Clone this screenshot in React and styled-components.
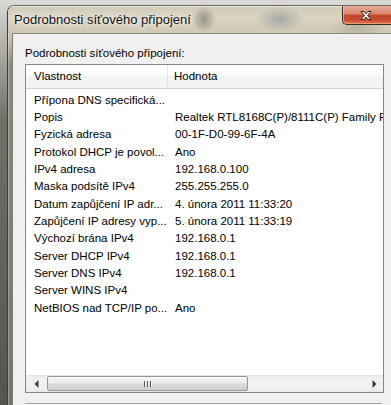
import React from "react";
import styled, { createGlobalStyle } from "styled-components";

const Global = createGlobalStyle`
  html, body { margin: 0; padding: 0; }
  body {
    width: 391px;
    height: 405px;
    overflow: hidden;
    background: linear-gradient(180deg, #d9d9d7 0px, #b4b6b0 40px, #6d716a 120px, #51564f 405px);
    font-family: "Liberation Sans", Arial, sans-serif;
  }
`;

const Desktop = styled.div`
  padding: 5px 0 0 7px;
  height: 400px;
`;

const Window = styled.div`
  width: 383px;
  height: 399px;
  border-top: 1px solid #6f6b60;
  border-left: 1px solid #3f3d37;
  border-top-left-radius: 7px;
  overflow: hidden;
  display: flex;
  flex-direction: column;
  background:
    linear-gradient(90deg, rgba(255,255,255,0.55) 0px, rgba(255,255,255,0) 1px),
    linear-gradient(180deg, #d4cebb 0px, #cdc7b3 28px, #8e8a7b 60px, #77746a 405px);
`;

const TitleBar = styled.div`
  height: 27px;
  flex: none;
  display: flex;
  align-items: flex-start;
  background:
    radial-gradient(ellipse 12px 13px at 196px 13px, rgba(70, 72, 66, 0.45), rgba(70,72,66,0) 100%),
    radial-gradient(ellipse 24px 12px at 272px 13px, rgba(110, 130, 140, 0.5), rgba(110,130,140,0) 100%),
    radial-gradient(ellipse 30px 10px at 350px 22px, rgba(150, 160, 130, 0.5), rgba(150,160,130,0) 100%),
    linear-gradient(180deg, #d2ccb9 0px, #d9d3c1 12px, #cfc8b4 27px);
  box-shadow: inset 0 1px 0 rgba(255,255,255,0.5);
`;

const Title = styled.div`
  padding: 6px 0 0 6px;
  font-size: 13px;
  line-height: 16px;
  color: #111;
  text-shadow: 0 0 6px rgba(255,255,255,0.95), 0 0 3px rgba(255,255,255,0.9);
  white-space: nowrap;
`;

const CloseButton = styled.div`
  margin-left: auto;
  width: 46px;
  height: 18px;
  border: 1px solid #3b2a24;
  border-top: none;
  border-right: none;
  border-bottom-left-radius: 5px;
  display: flex;
  align-items: center;
  justify-content: center;
  padding-right: 2px;
  background: linear-gradient(180deg, #e8aa98 0%, #d8836b 45%, #c2472b 50%, #c94a2c 75%, #e0744f 100%);
  box-shadow: inset 1px 0 0 rgba(255,255,255,0.45), inset 0 -1px 0 rgba(255,220,200,0.4);
`;

const Client = styled.div`
  flex: 1;
  margin-left: 4px;
  border-top: 1px solid #8c8879;
  border-left: 1px solid #7d7a6f;
  background: #f0f0f0;
  padding: 12px 0 0 12px;
  display: flex;
  flex-direction: column;
`;

const GroupLabel = styled.div`
  font-size: 11.5px;
  line-height: 14px;
  height: 18px;
  color: #000;
  white-space: nowrap;
`;

const ListBox = styled.div`
  width: 357px;
  height: 327px;
  border: 1px solid #828790;
  background: #fff;
  display: flex;
  flex-direction: column;
  overflow: hidden;
`;

const Header = styled.div`
  flex: none;
  height: 23px;
  display: grid;
  grid-template-columns: 142px 1fr;
  border-bottom: 1px solid #d5d5d5;
  background: linear-gradient(180deg, #ffffff 0%, #ffffff 45%, #f3f4f6 46%, #f3f4f6 100%);
`;

const HeaderCell = styled.div`
  font-size: 11.5px;
  line-height: 23px;
  padding-left: ${(p) => (p.$first ? "8px" : "6px")};
  border-right: ${(p) => (p.$first ? "1px solid #e3e4e6" : "none")};
  color: #000;
  white-space: nowrap;
`;

const Rows = styled.div`
  flex: 1;
  padding-top: 2px;
  overflow: hidden;
`;

const Row = styled.div`
  display: grid;
  grid-template-columns: 142px 1fr;
  height: 17.33px;
  align-items: center;
  font-size: 11.5px;
  color: #000;
  white-space: nowrap;
`;

const Cell = styled.div`
  padding-left: ${(p) => (p.$first ? "8px" : "7px")};
  overflow: hidden;
  white-space: nowrap;
`;

const ScrollBar = styled.div`
  flex: none;
  height: 17px;
  display: flex;
  align-items: stretch;
  background: linear-gradient(180deg, #e4e4e4 0px, #f1f1f1 3px, #f1f1f1 13px, #e9e9e9 17px);
`;

const ArrowButton = styled.div`
  width: ${(p) => p.$w}px;
  flex: none;
  display: flex;
  align-items: center;
  justify-content: center;
`;

const Thumb = styled.div`
  width: 199px;
  flex: none;
  margin: 1px 0;
  border: 1px solid #979797;
  border-radius: 2px;
  background: linear-gradient(180deg, #f5f5f5 0%, #ececec 45%, #dadada 55%, #d0d0d0 100%);
  box-shadow: inset 0 1px 0 #fff;
  display: flex;
  align-items: center;
  justify-content: center;
  gap: 1px;
`;

const Grip = styled.span`
  width: 1px;
  height: 6px;
  background: #4e4e4e;
  box-shadow: 1px 0 0 #fdfdfd;
  margin-right: 1px;
`;

const Spacer = styled.div`
  flex: 1;
`;

const Separator = styled.div`
  margin-top: 10px;
  width: 357px;
  height: 1px;
  background: #a0a0a0;
  box-shadow: 0 1px 0 #ffffff;
`;

const rows = [
  ["Přípona DNS specifická...", ""],
  ["Popis", "Realtek RTL8168C(P)/8111C(P) Family PCI-E Gigabit Ethernet NIC (NDIS 6.20)"],
  ["Fyzická adresa", "00-1F-D0-99-6F-4A"],
  ["Protokol DHCP je povol...", "Ano"],
  ["IPv4 adresa", "192.168.0.100"],
  ["Maska podsítě IPv4", "255.255.255.0"],
  ["Datum zapůjčení IP adr...", "4. února 2011 11:33:20"],
  ["Zapůjčení IP adresy vyp...", "5. února 2011 11:33:19"],
  ["Výchozí brána IPv4", "192.168.0.1"],
  ["Server DHCP IPv4", "192.168.0.1"],
  ["Server DNS IPv4", "192.168.0.1"],
  ["Server WINS IPv4", ""],
  ["NetBIOS nad TCP/IP po...", "Ano"],
];

export default function App() {
  return (
    <>
      <Global />
      <Desktop>
        <Window>
          <TitleBar>
            <Title>Podrobnosti síťového připojení</Title>
            <CloseButton>
              <svg width="14" height="11" viewBox="0 0 14 11">
                <path
                  d="M2 1.5 L5 1.5 L7 3.8 L9 1.5 L12 1.5 L8.6 5.5 L12 9.5 L9 9.5 L7 7.2 L5 9.5 L2 9.5 L5.4 5.5 Z"
                  fill="#f4f4f4"
                  stroke="#3a2420"
                  strokeWidth="1"
                  strokeLinejoin="round"
                />
              </svg>
            </CloseButton>
          </TitleBar>
          <Client>
            <GroupLabel>Podrobnosti síťového připojení:</GroupLabel>
            <ListBox>
              <Header>
                <HeaderCell $first>Vlastnost</HeaderCell>
                <HeaderCell>Hodnota</HeaderCell>
              </Header>
              <Rows>
                {rows.map(([k, v], i) => (
                  <Row key={i}>
                    <Cell $first>{k}</Cell>
                    <Cell>{v}</Cell>
                  </Row>
                ))}
              </Rows>
              <ScrollBar>
                <ArrowButton $w={21}>
                  <svg width="5" height="8" viewBox="0 0 5 8">
                    <path d="M4.5 0 L0.5 4 L4.5 8 Z" fill="#3c3c3c" />
                  </svg>
                </ArrowButton>
                <Thumb>
                  <Grip />
                  <Grip />
                  <Grip />
                </Thumb>
                <Spacer />
                <ArrowButton $w={17}>
                  <svg width="5" height="8" viewBox="0 0 5 8">
                    <path d="M0.5 0 L4.5 4 L0.5 8 Z" fill="#3c3c3c" />
                  </svg>
                </ArrowButton>
              </ScrollBar>
            </ListBox>
            <Separator />
          </Client>
        </Window>
      </Desktop>
    </>
  );
}
